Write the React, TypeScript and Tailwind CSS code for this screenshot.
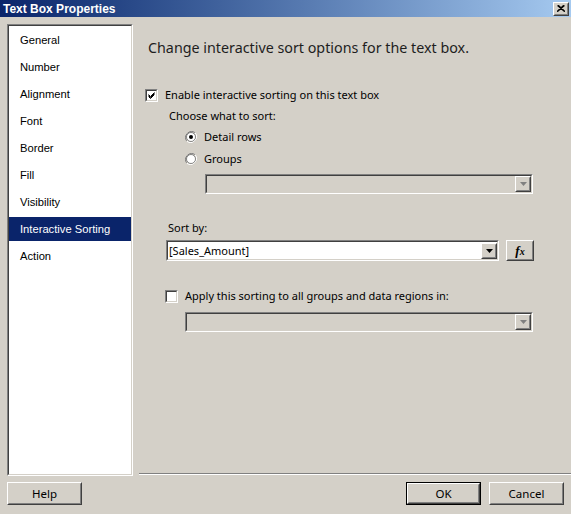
import React from 'react';

const ui = { fontFamily: '"Noto Sans", "Open Sans", sans-serif' };
const classic = { fontFamily: '"Liberation Sans", Arial, sans-serif' };

const items = ['General', 'Number', 'Alignment', 'Font', 'Border', 'Fill', 'Visibility', 'Interactive Sorting', 'Action'];

// two-layer sunken frame, win classic style
const Sunken = ({ className = '', inner = 'bg-white', children }: any) => (
  <div className={`border border-t-[#808080] border-l-[#808080] border-b-white border-r-white ${className}`}>
    <div className={`h-full w-full border border-t-[#404040] border-l-[#404040] border-b-[#d4d0c8] border-r-[#d4d0c8] ${inner}`}>
      {children}
    </div>
  </div>
);

const Raised = ({ className = '', children }: any) => (
  <div className={`border border-t-white border-l-white border-b-[#404040] border-r-[#404040] bg-[#d4d0c8] ${className}`}>
    <div className="h-full w-full border border-t-[#d4d0c8] border-l-[#d4d0c8] border-b-[#808080] border-r-[#808080] flex items-center justify-center">
      {children}
    </div>
  </div>
);

const Checkbox = ({ checked }: { checked?: boolean }) => (
  <Sunken className="w-[13px] h-[13px] shrink-0">
    {checked && (
      <svg width="9" height="9" viewBox="0 0 9 9" className="block">
        <path d="M1.5 3.5 L3.5 5.5 L7.5 1.5 M1.5 4.5 L3.5 6.5 L7.5 2.5 M1.5 5.5 L3.5 7.5 L7.5 3.5" stroke="#000" strokeWidth="1" fill="none" />
      </svg>
    )}
  </Sunken>
);

const Radio = ({ checked }: { checked?: boolean }) => (
  <svg width="12" height="12" viewBox="0 0 12 12" className="shrink-0">
    <path d="M10.2 1.8 A6 6 0 0 0 1.8 10.2" stroke="#808080" strokeWidth="1" fill="none" />
    <path d="M1.8 10.2 A6 6 0 0 0 10.2 1.8" stroke="#ffffff" strokeWidth="1" fill="none" />
    <circle cx="6" cy="6" r="4.5" fill="#fff" stroke="#404040" strokeWidth="0.6" />
    {checked && <circle cx="6" cy="6" r="2" fill="#000" />}
  </svg>
);

const Arrow = ({ disabled }: { disabled?: boolean }) => (
  <Raised className="w-[16px] h-[16px] shrink-0">
    <svg width="7" height="4" viewBox="0 0 7 4">
      <path d="M0 0 H7 L3.5 4 Z" fill={disabled ? '#808080' : '#000'} />
    </svg>
  </Raised>
);

const Combo = ({ className = '', value, disabled }: any) => (
  <Sunken className={className} inner={disabled ? 'bg-[#d4d0c8]' : 'bg-white'}>
    <div className="flex items-center h-full">
      <span className="flex-1 pl-[1px] text-[11px] text-black leading-none" style={ui}>{value}</span>
      <Arrow disabled={disabled} />
    </div>
  </Sunken>
);

const Button = ({ label, isDefault, className = '' }: any) => {
  const btn = (
    <Raised className="h-full w-full">
      <span className="text-[11.5px] text-black" style={ui}>{label}</span>
    </Raised>
  );
  return isDefault ? (
    <div className={`border border-black ${className}`}>{btn}</div>
  ) : (
    <div className={className}>{btn}</div>
  );
};

export default function App() {
  return (
    <div className="w-[571px] h-[514px] bg-[#d4d0c8] flex flex-col overflow-hidden">
      {/* title bar */}
      <div className="h-[17px] flex items-center bg-gradient-to-r from-[#0a246a] to-[#a6caf0] pl-[3px] pr-[2px]">
        <span className="flex-1 text-white font-bold text-[12px]" style={classic}>Text Box Properties</span>
        <Raised className="w-[16px] h-[14px]">
          <svg width="8" height="7" viewBox="0 0 8 7">
            <path d="M0.5 0.5 L7.5 6.5 M7.5 0.5 L0.5 6.5 M1.5 0.5 L8 6.5 M6.5 0.5 L0 6.5" stroke="#000" strokeWidth="1.1" />
          </svg>
        </Raised>
      </div>

      <div className="flex h-[459px]">
        {/* page list */}
        <div className="pl-[7px] pt-[7px]">
          <Sunken className="w-[126px] h-[452px]">
            <div className="flex flex-col gap-[3px] pt-[2px]" style={classic}>
              {items.map((it) => (
                <div
                  key={it}
                  className={`h-[24px] flex items-center pl-[11px] text-[11.2px] ${
                    it === 'Interactive Sorting' ? 'bg-[#0a246a] text-white' : 'text-black'
                  }`}
                >
                  {it}
                </div>
              ))}
            </div>
          </Sunken>
        </div>

        {/* page content */}
        <div className="flex-1 flex flex-col text-[11px] text-black" style={ui}>
          <div className="h-[20px] mt-[21px] ml-[15px] flex items-center text-[14.3px] text-[#1e1e1e]">
            Change interactive sort options for the text box.
          </div>

          <div className="h-[16px] mt-[29px] ml-[12px] flex items-center gap-[7px]">
            <Checkbox checked />
            <span>Enable interactive sorting on this text box</span>
          </div>
          <div className="h-[16px] mt-[5px] ml-[36px] flex items-center">Choose what to sort:</div>
          <div className="h-[16px] mt-[5px] ml-[52px] flex items-center gap-[7px]">
            <Radio checked />
            <span>Detail rows</span>
          </div>
          <div className="h-[16px] mt-[6px] ml-[52px] flex items-center gap-[7px]">
            <Radio />
            <span>Groups</span>
          </div>
          <Combo className="mt-[7px] ml-[72px] w-[328px] h-[20px]" disabled />

          <div className="h-[16px] mt-[26px] ml-[35px] flex items-center">Sort by:</div>
          <div className="mt-[4px] ml-[33px] flex gap-[7px]">
            <Combo className="w-[333px] h-[21px]" value="[Sales_Amount]" />
            <Raised className="w-[28px] h-[21px]">
              <span className="italic font-bold text-[13px] leading-none" style={{ fontFamily: '"Liberation Serif", serif' }}>
                f<span className="text-[10px]">x</span>
              </span>
            </Raised>
          </div>

          <div className="h-[16px] mt-[27px] ml-[32px] flex items-center gap-[7px]">
            <Checkbox />
            <span>Apply this sorting to all groups and data regions in:</span>
          </div>
          <Combo className="mt-[8px] ml-[52px] w-[348px] h-[20px]" disabled />

          <div className="mt-auto ml-[6px] mb-[1px] h-[2px] border-t border-t-[#808080] border-b border-b-white" />
        </div>
      </div>

      {/* buttons */}
      <div className="flex mt-[6px] h-[23px] px-[7px]">
        <Button label="Help" className="w-[75px] h-[23px]" />
        <div className="flex-1" />
        <Button label="OK" isDefault className="w-[75px] h-[23px]" />
        <Button label="Cancel" className="w-[75px] h-[23px] ml-[8px]" />
      </div>
    </div>
  );
}
